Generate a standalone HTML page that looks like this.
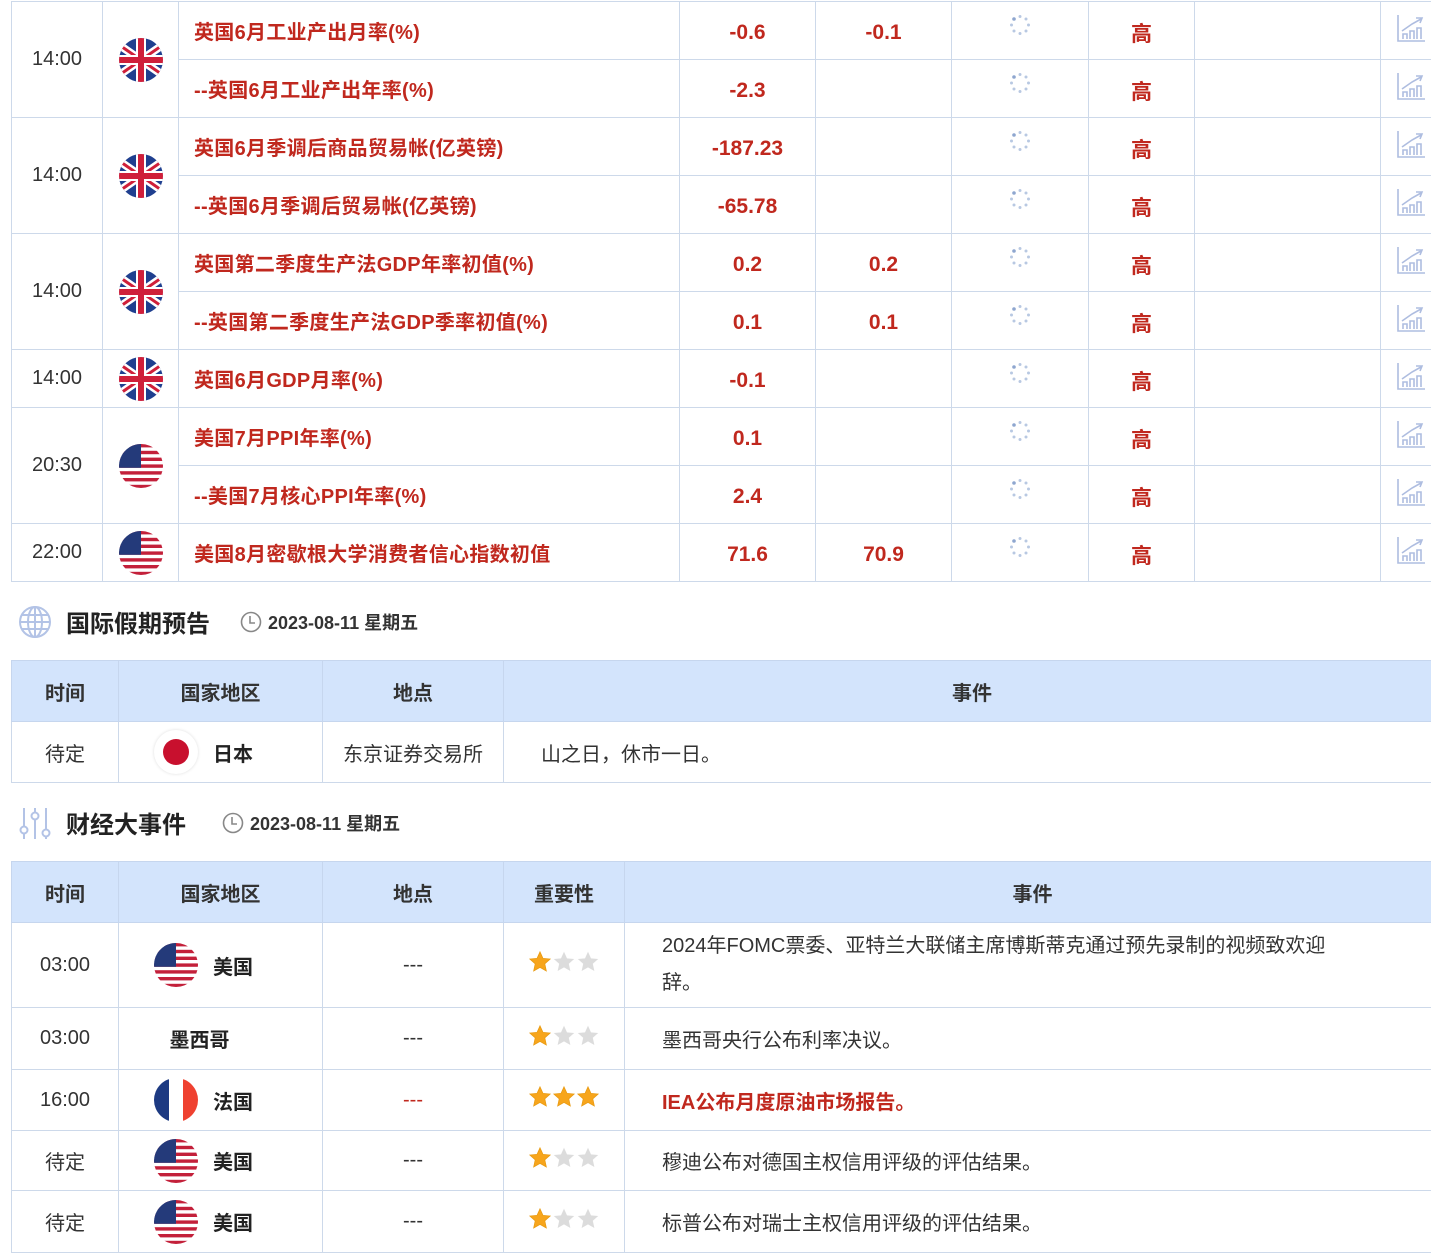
<!DOCTYPE html>
<html><head><meta charset="utf-8">
<style>
*{margin:0;padding:0;box-sizing:border-box}
body{width:1431px;height:1247px;overflow:hidden;background:#fff;font-family:"Liberation Sans","Noto Sans CJK SC",sans-serif;color:#333;position:relative}
table{border-collapse:collapse;table-layout:fixed;position:absolute;left:11px}
td,th{border:1px solid #cdd9ea;text-align:center;vertical-align:middle;padding:0}
#t1 td{height:58px}
.time{font-size:20px;color:#333}
.ev{text-align:left;padding-left:15px;font-size:20px;font-weight:bold;color:#c0281e;letter-spacing:0.3px}
.v{font-size:21px;font-weight:bold;color:#c0281e;padding-top:4px!important}
.fl{width:44px;height:44px;display:block;margin:0 auto}
th{background:#d3e4fc;font-size:20px;font-weight:bold;color:#333;height:61px;border-color:#c6d6ee}
.hd{position:absolute;left:18px;display:flex;align-items:center}
.hd .tt{font-size:24px;font-weight:bold;color:#222;margin-left:14px}
.hd .dt{font-size:18px;font-weight:bold;color:#333;display:flex;align-items:center}
.c2 td{font-size:20px;color:#333}
.cn{font-weight:bold;color:#222}
.cf{display:flex;align-items:center;padding-left:35px;gap:15px}
</style></head><body>
<svg width="0" height="0" style="position:absolute">
<defs>
<clipPath id="cc"><circle cx="22" cy="22" r="22"/></clipPath>
<symbol id="uk" viewBox="0 0 44 44"><g clip-path="url(#cc)">
<rect width="44" height="44" fill="#1f3f8f"/>
<path d="M-4 4L48 40M48 4L-4 40" stroke="#fff" stroke-width="8"/>
<path d="M-4 4L48 40M48 4L-4 40" stroke="#cf1f3a" stroke-width="3"/>
<rect x="17" y="0" width="10" height="44" fill="#fff"/><rect x="0" y="17" width="44" height="10" fill="#fff"/>
<rect x="19" y="0" width="6" height="44" fill="#cf1f3a"/><rect x="0" y="19" width="44" height="6" fill="#cf1f3a"/>
</g></symbol>
<symbol id="us" viewBox="0 0 44 44"><g clip-path="url(#cc)">
<rect width="44" height="44" fill="#fff"/>
<g fill="#c3203a"><rect y="0" width="44" height="3.4"/><rect y="6.8" width="44" height="3.4"/><rect y="13.6" width="44" height="3.4"/><rect y="20.4" width="44" height="3.4"/><rect y="27.2" width="44" height="3.4"/><rect y="34" width="44" height="3.4"/><rect y="40.8" width="44" height="3.4"/></g>
<rect width="22" height="23.8" fill="#243a7a"/>
</g></symbol>
<symbol id="fr" viewBox="0 0 44 44"><g clip-path="url(#cc)">
<rect width="15" height="44" fill="#1d3a82"/><rect x="15" width="14" height="44" fill="#fff"/><rect x="29" width="15" height="44" fill="#ef4130"/>
</g></symbol>
<symbol id="sp" viewBox="0 0 24 24"><g fill="#b8c8e2"><circle cx="6" cy="6" r="1.8" fill="#8ea6cf"/><circle cx="12" cy="3.5" r="1.5"/><circle cx="18" cy="6" r="1.5"/><circle cx="20.5" cy="12" r="1.5"/><circle cx="18" cy="18" r="1.5"/><circle cx="12" cy="20.5" r="1.5"/><circle cx="6" cy="18" r="1.5"/><circle cx="3.5" cy="12" r="1.5"/></g></symbol>
<symbol id="ch" viewBox="0 0 30 30" ><g fill="none" stroke="#aebde0" stroke-width="1.6"><path d="M2 2V28H29"/><path d="M6 18L16 11L25 6"/><path d="M20 5L26 5L24 10"/><path d="M7 26V21H11V26M14 26V18H18V26M21 26V15H25V26"/></g></symbol>
<symbol id="sy" viewBox="0 0 20 20"><path d="M10 1.5L12.5 7L18.5 7.5L14 11.5L15.3 17.5L10 14.5L4.7 17.5L6 11.5L1.5 7.5L7.5 7Z" fill="#f7a51c" stroke="#e89a10" stroke-width=".6"/></symbol>
<symbol id="sg" viewBox="0 0 20 20"><path d="M10 1.5L12.5 7L18.5 7.5L14 11.5L15.3 17.5L10 14.5L4.7 17.5L6 11.5L1.5 7.5L7.5 7Z" fill="#dcdcdc"/></symbol>
</defs></svg>

<table id="t1" style="top:1px;width:1430px">
<colgroup><col style="width:91px"><col style="width:76px"><col style="width:501px"><col style="width:136px"><col style="width:136px"><col style="width:137px"><col style="width:106px"><col style="width:186px"><col style="width:61px"></colgroup>
<tr><td rowspan="2" class="time">14:00</td><td rowspan="2"><svg class="fl"><use href="#uk"/></svg></td><td class="ev">英国6月工业产出月率(%)</td><td class="v">-0.6</td><td class="v">-0.1</td><td><svg width="24" height="24" style="margin-top:-6px"><use href="#sp"/></svg></td><td class="v">高</td><td></td><td style="text-align:left;padding-left:15px"><svg width="30" height="30"><use href="#ch"/></svg></td></tr>
<tr><td class="ev">--英国6月工业产出年率(%)</td><td class="v">-2.3</td><td></td><td><svg width="24" height="24" style="margin-top:-6px"><use href="#sp"/></svg></td><td class="v">高</td><td></td><td style="text-align:left;padding-left:15px"><svg width="30" height="30"><use href="#ch"/></svg></td></tr>
<tr><td rowspan="2" class="time">14:00</td><td rowspan="2"><svg class="fl"><use href="#uk"/></svg></td><td class="ev">英国6月季调后商品贸易帐(亿英镑)</td><td class="v">-187.23</td><td></td><td><svg width="24" height="24" style="margin-top:-6px"><use href="#sp"/></svg></td><td class="v">高</td><td></td><td style="text-align:left;padding-left:15px"><svg width="30" height="30"><use href="#ch"/></svg></td></tr>
<tr><td class="ev">--英国6月季调后贸易帐(亿英镑)</td><td class="v">-65.78</td><td></td><td><svg width="24" height="24" style="margin-top:-6px"><use href="#sp"/></svg></td><td class="v">高</td><td></td><td style="text-align:left;padding-left:15px"><svg width="30" height="30"><use href="#ch"/></svg></td></tr>
<tr><td rowspan="2" class="time">14:00</td><td rowspan="2"><svg class="fl"><use href="#uk"/></svg></td><td class="ev">英国第二季度生产法GDP年率初值(%)</td><td class="v">0.2</td><td class="v">0.2</td><td><svg width="24" height="24" style="margin-top:-6px"><use href="#sp"/></svg></td><td class="v">高</td><td></td><td style="text-align:left;padding-left:15px"><svg width="30" height="30"><use href="#ch"/></svg></td></tr>
<tr><td class="ev">--英国第二季度生产法GDP季率初值(%)</td><td class="v">0.1</td><td class="v">0.1</td><td><svg width="24" height="24" style="margin-top:-6px"><use href="#sp"/></svg></td><td class="v">高</td><td></td><td style="text-align:left;padding-left:15px"><svg width="30" height="30"><use href="#ch"/></svg></td></tr>
<tr><td class="time">14:00</td><td><svg class="fl"><use href="#uk"/></svg></td><td class="ev">英国6月GDP月率(%)</td><td class="v">-0.1</td><td></td><td><svg width="24" height="24" style="margin-top:-6px"><use href="#sp"/></svg></td><td class="v">高</td><td></td><td style="text-align:left;padding-left:15px"><svg width="30" height="30"><use href="#ch"/></svg></td></tr>
<tr><td rowspan="2" class="time">20:30</td><td rowspan="2"><svg class="fl"><use href="#us"/></svg></td><td class="ev">美国7月PPI年率(%)</td><td class="v">0.1</td><td></td><td><svg width="24" height="24" style="margin-top:-6px"><use href="#sp"/></svg></td><td class="v">高</td><td></td><td style="text-align:left;padding-left:15px"><svg width="30" height="30"><use href="#ch"/></svg></td></tr>
<tr><td class="ev">--美国7月核心PPI年率(%)</td><td class="v">2.4</td><td></td><td><svg width="24" height="24" style="margin-top:-6px"><use href="#sp"/></svg></td><td class="v">高</td><td></td><td style="text-align:left;padding-left:15px"><svg width="30" height="30"><use href="#ch"/></svg></td></tr>
<tr><td class="time">22:00</td><td><svg class="fl"><use href="#us"/></svg></td><td class="ev">美国8月密歇根大学消费者信心指数初值</td><td class="v">71.6</td><td class="v">70.9</td><td><svg width="24" height="24" style="margin-top:-6px"><use href="#sp"/></svg></td><td class="v">高</td><td></td><td style="text-align:left;padding-left:15px"><svg width="30" height="30"><use href="#ch"/></svg></td></tr>
</table>

<div class="hd" style="top:604px">
<svg width="34" height="34" viewBox="0 0 34 34"><g fill="none" stroke="#b3c3e6" stroke-width="2"><circle cx="17" cy="17" r="15"/><ellipse cx="17" cy="17" rx="7" ry="15"/><path d="M2 17H32M4 10H30M4 24H30M17 2V32"/></g></svg>
<span class="tt">国际假期预告</span>
<span class="dt" style="margin-left:30px"><svg width="22" height="22" viewBox="0 0 22 22" style="margin-right:6px"><circle cx="11" cy="11" r="9.5" fill="none" stroke="#888" stroke-width="1.6"/><path d="M10 5V12H15" fill="none" stroke="#888" stroke-width="1.6"/></svg>2023-08-11 星期五</span>
</div>

<table class="c2" style="top:660px;width:1430px">
<colgroup><col style="width:107px"><col style="width:204px"><col style="width:181px"><col></colgroup>
<tr><th>时间</th><th>国家地区</th><th>地点</th><th>事件</th></tr>
<tr><td style="height:61px">待定</td><td><div class="cf"><div style="width:44px;height:44px;border-radius:50%;background:#fff;box-shadow:0 0 3px #ddd;display:flex;align-items:center;justify-content:center"><div style="width:26px;height:26px;border-radius:50%;background:#c8102e"></div></div><span class="cn">日本</span></div></td><td>东京证券交易所</td><td style="text-align:left;padding-left:37px">山之日，休市一日。</td></tr>
</table>

<div class="hd" style="top:805px">
<svg width="34" height="34" viewBox="0 0 34 34"><g fill="none" stroke="#b3c3e6" stroke-width="2"><path d="M6 2V20M6 28V33M17 2V6M17 14V33M28 2V23M28 31V33"/><circle cx="6" cy="24" r="3.5"/><circle cx="17" cy="10" r="3.5"/><circle cx="28" cy="27" r="3.5"/></g></svg>
<span class="tt">财经大事件</span>
<span class="dt" style="margin-left:36px"><svg width="22" height="22" viewBox="0 0 22 22" style="margin-right:6px"><circle cx="11" cy="11" r="9.5" fill="none" stroke="#888" stroke-width="1.6"/><path d="M10 5V12H15" fill="none" stroke="#888" stroke-width="1.6"/></svg>2023-08-11 星期五</span>
</div>

<table class="c2" style="top:861px;width:1430px">
<colgroup><col style="width:107px"><col style="width:204px"><col style="width:181px"><col style="width:121px"><col></colgroup>
<tr><th>时间</th><th>国家地区</th><th>地点</th><th>重要性</th><th>事件</th></tr>
<tr><td style="height:85px">03:00</td><td><div class="cf"><svg width="44" height="44"><use href="#us"/></svg><span class="cn">美国</span></div></td><td>---</td><td><svg width="24" height="24"><use href="#sy"/></svg><svg width="24" height="24"><use href="#sg"/></svg><svg width="24" height="24"><use href="#sg"/></svg></td><td style="text-align:left;padding:0 100px 0 37px;line-height:37px">2024年FOMC票委、亚特兰大联储主席博斯蒂克通过预先录制的视频致欢迎辞。</td></tr>
<tr><td style="height:62px">03:00</td><td><div style="padding-right:42px" class="cn">墨西哥</div></td><td>---</td><td><svg width="24" height="24"><use href="#sy"/></svg><svg width="24" height="24"><use href="#sg"/></svg><svg width="24" height="24"><use href="#sg"/></svg></td><td style="text-align:left;padding-left:37px">墨西哥央行公布利率决议。</td></tr>
<tr><td style="height:61px">16:00</td><td><div class="cf"><svg width="44" height="44"><use href="#fr"/></svg><span class="cn">法国</span></div></td><td style="color:#c0281e">---</td><td><svg width="24" height="24"><use href="#sy"/></svg><svg width="24" height="24"><use href="#sy"/></svg><svg width="24" height="24"><use href="#sy"/></svg></td><td style="text-align:left;padding-left:37px;color:#c0281e;font-weight:bold">IEA公布月度原油市场报告。</td></tr>
<tr><td style="height:60px">待定</td><td><div class="cf"><svg width="44" height="44"><use href="#us"/></svg><span class="cn">美国</span></div></td><td>---</td><td><svg width="24" height="24"><use href="#sy"/></svg><svg width="24" height="24"><use href="#sg"/></svg><svg width="24" height="24"><use href="#sg"/></svg></td><td style="text-align:left;padding-left:37px">穆迪公布对德国主权信用评级的评估结果。</td></tr>
<tr><td style="height:62px">待定</td><td><div class="cf"><svg width="44" height="44"><use href="#us"/></svg><span class="cn">美国</span></div></td><td>---</td><td><svg width="24" height="24"><use href="#sy"/></svg><svg width="24" height="24"><use href="#sg"/></svg><svg width="24" height="24"><use href="#sg"/></svg></td><td style="text-align:left;padding-left:37px">标普公布对瑞士主权信用评级的评估结果。</td></tr>
</table>
</body></html>
